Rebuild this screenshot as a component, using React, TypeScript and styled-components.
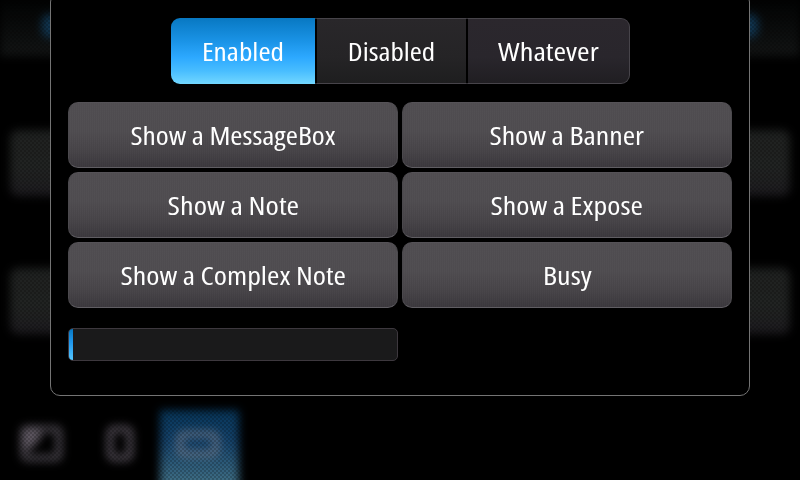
import React from 'react';
import styled, { createGlobalStyle } from 'styled-components';

const GlobalStyle = createGlobalStyle`
  * { box-sizing: border-box; }
  html, body { margin: 0; background: #000; overflow: hidden; }
  body { font-family: "Open Sans", "Noto Sans", sans-serif; }
  button { font: inherit; }
`;

const Screen = styled.main`
  position: relative;
  width: 800px;
  height: 480px;
  overflow: hidden;
  background: #000;
`;

const Backdrop = styled.div`
  position: absolute;
  inset: 0;
  display: flex;
  flex-direction: column;
  &::after {
    content: '';
    position: absolute;
    inset: 0;
    background: repeating-conic-gradient(rgba(0, 0, 0, 0.2) 0 25%, transparent 0 50%) 0 0 / 4px 4px;
  }
`;

const Blurred = styled.div`
  height: 480px;
  display: flex;
  flex-direction: column;
  filter: blur(4.5px);
`;

const HeaderBar = styled.header`
  height: 56px;
  flex: none;
  padding: 14px 42px 0;
  display: flex;
  justify-content: space-between;
  background: linear-gradient(#020303, #131515);
`;

const HeaderMark = styled.span`
  width: 16px;
  height: 24px;
  border-radius: 8px;
  background: #103652;
`;

const FaintList = styled.div`
  flex: 1;
  padding: 74px 10px 0;
  display: flex;
  flex-direction: column;
  gap: 72px;
`;

const FaintRow = styled.div`
  height: 66px;
  border-radius: 8px;
  background: linear-gradient(#202221, #212322 60%, #1d1b1f);
`;

const TabBar = styled.nav`
  height: 70px;
  flex: none;
  display: flex;
`;

const Tab = styled.div<{ $active?: boolean }>`
  width: ${p => (p.$active ? 79 : 80)}px;
  height: 90px;
  display: flex;
  justify-content: center;
  padding-top: 13px;
  background: ${p => (p.$active ? 'linear-gradient(#07365a, #15426a 35%, #3d6c83 78%)' : 'transparent')};
`;

const Panel = styled.section`
  position: relative;
  width: 700px;
  height: 404px;
  margin: -8px auto 0;
  padding: 25px 17px 0;
  border: 1px solid #747474;
  border-radius: 10px;
  background: #000;
`;

const Segments = styled.div`
  width: 459px;
  height: 66px;
  margin: 0 0 18px 103px;
  display: flex;
`;

const Segment = styled.button<{ $width: number; $active?: boolean; $last?: boolean }>`
  width: ${p => p.$width}px;
  height: 66px;
  padding: 0;
  color: #fff;
  border: solid ${p => (p.$active ? 'transparent' : '#47444a')};
  border-width: ${p => (p.$active ? '0' : p.$last ? '1px 1px 1px 0' : '1px 0')};
  border-radius: ${p => (p.$active ? '9px 0 0 9px' : p.$last ? '0 9px 9px 0' : '0')};
  background: ${p =>
    p.$active
      ? 'linear-gradient(#0878c2, #1a93e6 35%, #2da9ff 60%, #48bdff 80%, #72d7ff)'
      : p.$last
      ? 'linear-gradient(#2b272d, #29262c 60%, #201e22)'
      : 'linear-gradient(#29272a, #252426 60%, #1e1e1f)'};
`;

const SegmentGap = styled.span`
  width: 2px;
  height: 66px;
  border: solid #343237;
  border-width: 1px 0;
`;

const ButtonGrid = styled.div`
  display: grid;
  grid-template-columns: 330px 330px;
  grid-auto-rows: 66px;
  gap: 4px;
`;

const ActionButton = styled.button`
  padding: 0;
  color: #fff;
  border: 1px solid;
  border-color: #555257 #4b494d #605e63;
  border-radius: 10px;
  background:
    repeating-linear-gradient(90deg, rgba(255, 255, 255, 0.018) 0 1px, transparent 1px 2px),
    linear-gradient(#4f4c50, #4e4b4f 45%, #454246 75%, #39363b);
  background-origin: border-box;
`;

const Label = styled.span<{ $scale: number }>`
  display: inline-block;
  font-size: 25px;
  line-height: 34px;
  font-stretch: 75%;
  white-space: nowrap;
  transform: scaleX(${p => p.$scale});
`;

const ProgressTrack = styled.div`
  width: 330px;
  height: 33px;
  margin-top: 20px;
  border: 1px solid #3d383e;
  border-radius: 5px;
  overflow: hidden;
  background: #1a1a1b;
`;

const ProgressFill = styled.div`
  width: 4px;
  height: 31px;
  background: linear-gradient(#0878c2, #2199ee 45%, #55c6ff);
`;

const actions = [
  { text: 'Show a MessageBox', scale: 1.178 },
  { text: 'Show a Banner', scale: 1.195 },
  { text: 'Show a Note', scale: 1.21 },
  { text: 'Show a Expose', scale: 1.197 },
  { text: 'Show a Complex Note', scale: 1.197 },
  { text: 'Busy', scale: 1.2 },
];

const SplitIcon = () => (
  <svg width="50" height="40" viewBox="0 0 48 40" fill="none">
    <rect x="8" y="6" width="35" height="29" rx="3" stroke="#454148" strokeWidth="7" />
    <path d="M6 5h19v10l-10 11H6z" fill="#5f5862" />
  </svg>
);

const PortraitIcon = () => (
  <svg width="40" height="40" viewBox="0 0 40 40" fill="none">
    <rect x="10" y="6" width="20" height="29" rx="4" stroke="#4c464f" strokeWidth="7" />
  </svg>
);

const LandscapeIcon = () => (
  <svg width="48" height="40" viewBox="0 0 48 40" fill="none">
    <rect x="4" y="11" width="36" height="20" rx="4" stroke="#5f7086" strokeWidth="6" />
  </svg>
);

export default function App() {
  return (
    <>
      <GlobalStyle />
      <Screen>
        <Backdrop aria-hidden>
          <Blurred>
            <HeaderBar>
              <HeaderMark />
              <HeaderMark />
            </HeaderBar>
            <FaintList>
              <FaintRow />
              <FaintRow />
            </FaintList>
            <TabBar>
              <Tab><SplitIcon /></Tab>
              <Tab><PortraitIcon /></Tab>
              <Tab $active><LandscapeIcon /></Tab>
            </TabBar>
          </Blurred>
        </Backdrop>
        <Panel role="dialog">
          <Segments>
            <Segment $width={144} $active><Label $scale={1.175}>Enabled</Label></Segment>
            <SegmentGap />
            <Segment $width={149}><Label $scale={1.165}>Disabled</Label></Segment>
            <SegmentGap />
            <Segment $width={162} $last><Label $scale={1.215}>Whatever</Label></Segment>
          </Segments>
          <ButtonGrid>
            {actions.map(a => (
              <ActionButton key={a.text}><Label $scale={a.scale}>{a.text}</Label></ActionButton>
            ))}
          </ButtonGrid>
          <ProgressTrack role="progressbar" aria-valuenow={1}>
            <ProgressFill />
          </ProgressTrack>
        </Panel>
      </Screen>
    </>
  );
}
